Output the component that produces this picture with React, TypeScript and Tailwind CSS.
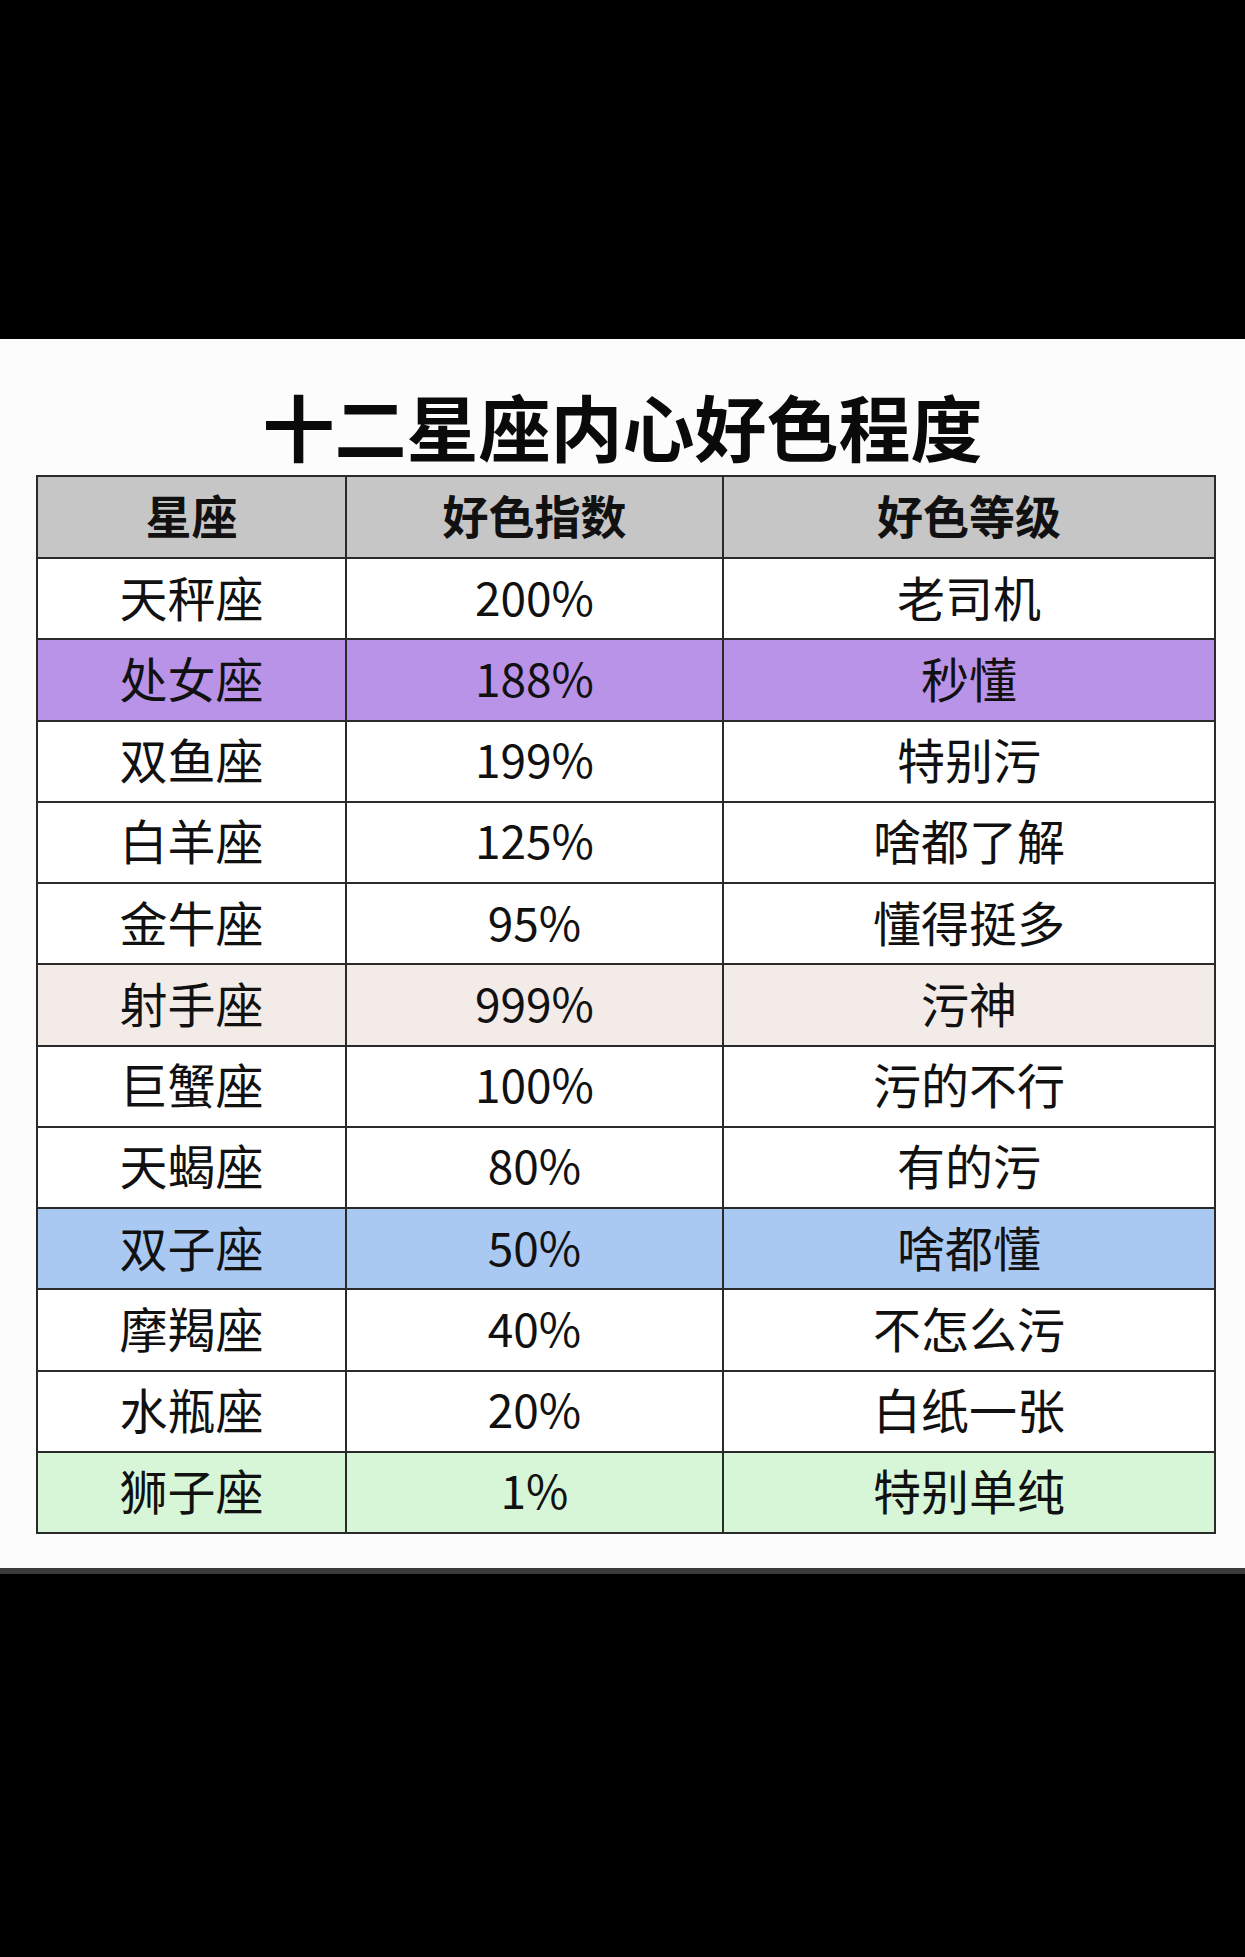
import React from 'react';

interface Row {
  sign: string;
  index: string;
  level: string;
  bg: string;
}

const rows: Row[] = [
  { sign: '天秤座', index: '200%', level: '老司机', bg: 'bg-white' },
  { sign: '处女座', index: '188%', level: '秒懂', bg: 'bg-[#b993e8]' },
  { sign: '双鱼座', index: '199%', level: '特别污', bg: 'bg-white' },
  { sign: '白羊座', index: '125%', level: '啥都了解', bg: 'bg-white' },
  { sign: '金牛座', index: '95%', level: '懂得挺多', bg: 'bg-white' },
  { sign: '射手座', index: '999%', level: '污神', bg: 'bg-[#f3ebe7]' },
  { sign: '巨蟹座', index: '100%', level: '污的不行', bg: 'bg-white' },
  { sign: '天蝎座', index: '80%', level: '有的污', bg: 'bg-white' },
  { sign: '双子座', index: '50%', level: '啥都懂', bg: 'bg-[#a9c9f2]' },
  { sign: '摩羯座', index: '40%', level: '不怎么污', bg: 'bg-white' },
  { sign: '水瓶座', index: '20%', level: '白纸一张', bg: 'bg-white' },
  { sign: '狮子座', index: '1%', level: '特别单纯', bg: 'bg-[#d7f6d7]' },
];

const font = { fontFamily: '"Noto Sans CJK SC", "Noto Sans", sans-serif' };

const cell = 'border-2 border-[#2a2a2a] text-center font-normal leading-none pb-[6px]';
const head = 'border-2 border-[#2a2a2a] text-[46px] font-bold leading-none pb-[6px]';

const App: React.FC = () => {
  return (
    <div className="w-[1245px] h-[1957px] bg-black flex flex-col" style={font}>
      <div className="h-[339px] bg-black" />
      <div className="h-[1229px] bg-[#fcfcfc] flex flex-col">
        <div className="h-[136px] pt-[36px] flex items-center justify-center">
          <h1 className="text-[72px] font-bold leading-none text-[#0a0a0a]">
            十二星座内心好色程度
          </h1>
        </div>
        <div className="ml-[36px] w-[1178px]">
          <table className="w-full border-collapse table-fixed text-[#111]">
            <colgroup>
              <col className="w-[309px]" />
              <col className="w-[377px]" />
              <col className="w-[492px]" />
            </colgroup>
            <thead>
              <tr className="h-[82px] bg-[#c6c6c6]">
                <th className={head}>星座</th>
                <th className={head}>好色指数</th>
                <th className={head}>好色等级</th>
              </tr>
            </thead>
            <tbody>
              {rows.map((r) => (
                <tr key={r.sign} className={`h-[81.25px] ${r.bg}`}>
                  <td className={`${cell} text-[48px]`}>{r.sign}</td>
                  <td className={`${cell} text-[46px]`}>{r.index}</td>
                  <td className={`${cell} text-[48px]`}>{r.level}</td>
                </tr>
              ))}
            </tbody>
          </table>
        </div>
      </div>
      <div className="h-[6px] bg-[#3a3a3a]" />
      <div className="flex-1 bg-black" />
    </div>
  );
};

export default App;
